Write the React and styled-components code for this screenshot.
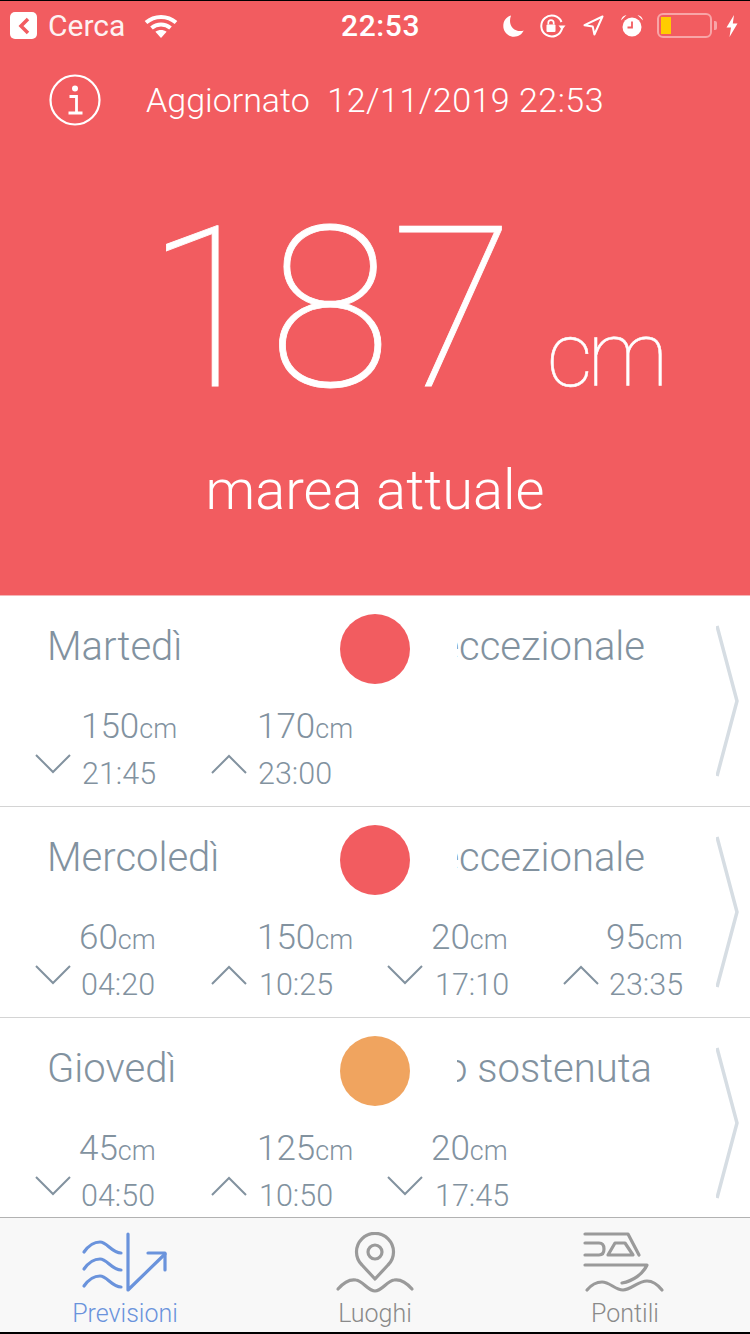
import React from "react";
import styled, { createGlobalStyle } from "styled-components";

const RED = "#f25c60";
const ORANGE = "#f0a45f";
const SLATE = "#82929f";

const GlobalStyle = createGlobalStyle`
  html, body { margin: 0; padding: 0; background: #000; }
  body { font-family: "Roboto", "Liberation Sans", sans-serif; }
`;

const Screen = styled.div`
  width: 750px;
  height: 1334px;
  padding: 1px 0 2px;
  box-sizing: border-box;
  display: flex;
  flex-direction: column;
  overflow: hidden;
  background: #000;
`;

const Header = styled.header`
  flex: 0 0 595px;
  box-sizing: border-box;
  background: ${RED};
  color: #fff;
  border-bottom: 1px solid #f5b5b7;
  display: flex;
  flex-direction: column;
`;

const StatusBar = styled.div`
  height: 49px;
  display: grid;
  grid-template-columns: 331px auto 1fr;
  align-items: center;
  padding: 0 12px 0 10px;
`;

const StatusLeft = styled.div`
  display: flex;
  align-items: center;
`;

const BackBadge = styled.span`
  width: 27px;
  height: 27px;
  border-radius: 5px;
  background: #fff;
  display: flex;
  align-items: center;
  justify-content: center;
`;

const Carrier = styled.span`
  font-size: 30px;
  margin: 0 19px 0 11px;
  opacity: 0.92;
`;

const Clock = styled.span`
  font-size: 30px;
  font-weight: 500;
  letter-spacing: 0.6px;
`;

const StatusRight = styled.div`
  display: flex;
  align-items: center;
  justify-content: flex-end;
  gap: 16px;
  & > svg:first-child {
    margin-right: -1px;
  }
`;

const Battery = styled.span`
  width: 55px;
  height: 25px;
  box-sizing: border-box;
  border: 2px solid rgba(255, 255, 255, 0.45);
  border-radius: 6px;
  padding: 2px;
  margin: 0 -2px 0 -3px;
  position: relative;
  display: block;
  &::before {
    content: "";
    display: block;
    width: 10px;
    height: 17px;
    background: #ffcc00;
  }
  &::after {
    content: "";
    position: absolute;
    right: -7px;
    top: 6px;
    width: 3px;
    height: 9px;
    background: rgba(255, 255, 255, 0.45);
    border-radius: 0 2px 2px 0;
  }
`;

const InfoRow = styled.div`
  display: flex;
  align-items: center;
  gap: 45px;
  padding: 0 0 0 49px;
  height: 52px;
  margin-top: 24px;
`;

const Updated = styled.span`
  font-size: 34px;
  font-weight: 300;
  white-space: pre;
`;

const UpdatedDate = styled.span`
  letter-spacing: 0.5px;
  margin-left: 1px;
`;

const Reading = styled.div`
  display: flex;
  align-items: baseline;
  margin: 104px 0 0 146px;
  height: 160px;
  line-height: 160px;
`;

const ReadingValue = styled.span`
  font-size: 224px;
  font-weight: 100;
  -webkit-text-stroke: 0.8px #fff;
`;

const ReadingUnit = styled.span`
  font-size: 90px;
  font-weight: 100;
  letter-spacing: -5px;
  margin-left: 33px;
  -webkit-text-stroke: 0.5px #fff;
`;

const Caption = styled.div`
  margin-top: 70px;
  text-align: center;
  font-size: 56px;
  font-weight: 300;
  line-height: 60px;
`;

const List = styled.main`
  flex: 1;
  min-height: 0;
  overflow: hidden;
  background: #fff;
`;

const Row = styled.section`
  height: 211px;
  box-sizing: border-box;
  border-bottom: 1px solid #d4d4d4;
  display: flex;
  color: ${SLATE};
`;

const RowBody = styled.div`
  width: 716px;
  flex: none;
  padding-top: 18px;
  box-sizing: border-box;
`;

const TitleLine = styled.div`
  display: flex;
  align-items: center;
  height: 70px;
`;

const Day = styled.h2`
  margin: 0;
  flex: 0 0 340px;
  box-sizing: border-box;
  padding: 0 0 6px 47px;
  font-size: 40px;
  font-weight: 300;
`;

const Dot = styled.span`
  flex: none;
  width: 70px;
  height: 70px;
  border-radius: 50%;
  background: ${(p) => p.$color};
`;

const Level = styled.div`
  margin-left: 47px;
  width: ${(p) => p.$width}px;
  overflow: hidden;
  display: flex;
  justify-content: flex-end;
  white-space: nowrap;
  padding-bottom: 6px;
  font-size: 40px;
  font-weight: 300;
`;

const Tides = styled.div`
  display: grid;
  grid-template-columns: repeat(4, 176px);
  margin: 22px 0 0 35px;
`;

const Tide = styled.div`
  display: flex;
  align-items: flex-end;
`;

const TideText = styled.div`
  margin-left: ${(p) => p.$offset}px;
  display: flex;
  flex-direction: column;
`;

const TideValue = styled.div`
  font-size: 35px;
  font-weight: 300;
  line-height: 42px;
  span {
    font-size: 27px;
  }
`;

const TideTime = styled.div`
  margin-left: ${(p) => p.$indent}px;
  font-size: 30.5px;
  font-weight: 300;
  line-height: 48px;
`;

const TideArrow = styled.svg`
  width: 36px;
  height: 20px;
  flex: none;
  margin-bottom: 24px;
`;

const RowChevron = styled.svg`
  width: 26px;
  height: 154px;
  flex: none;
  margin-top: 29px;
`;

const TabBar = styled.nav`
  flex: 0 0 115px;
  box-sizing: border-box;
  background: #f8f8f8;
  border-top: 1px solid #b2b2b2;
  display: grid;
  grid-template-columns: repeat(3, 250px);
`;

const Tab = styled.div`
  display: flex;
  flex-direction: column;
  align-items: center;
  color: ${(p) => (p.$active ? "#6a93dc" : "#8a8a8a")};
  font-size: 25px;
  font-weight: 300;
  line-height: 30px;
  padding-top: 14px;
`;

const TabIcon = styled.svg`
  width: 100px;
  height: 66px;
  margin-bottom: 1px;
  flex: none;
  fill: none;
  stroke: ${(p) => (p.$active ? "#6a93dc" : "#9a9a9a")};
  stroke-width: 3.2;
  stroke-linecap: round;
  stroke-linejoin: round;
`;

const days = [
  {
    name: "Martedì",
    color: RED,
    level: "eccezionale",
    levelWidth: 188,
    tides: [
      { dir: "down", value: 150, time: "21:45", offset: 10, indent: 1 },
      { dir: "up", value: 170, time: "23:00", offset: 10, indent: 1 },
    ],
  },
  {
    name: "Mercoledì",
    color: RED,
    level: "eccezionale",
    levelWidth: 188,
    tides: [
      { dir: "down", value: 60, time: "04:20", offset: 8, indent: 2 },
      { dir: "up", value: 150, time: "10:25", offset: 10, indent: 2 },
      { dir: "down", value: 20, time: "17:10", offset: 8, indent: 4 },
      { dir: "up", value: 95, time: "23:35", offset: 7, indent: 3 },
    ],
  },
  {
    name: "Giovedì",
    color: ORANGE,
    level: "molto sostenuta",
    levelWidth: 195,
    tides: [
      { dir: "down", value: 45, time: "04:50", offset: 8, indent: 2 },
      { dir: "up", value: 125, time: "10:50", offset: 10, indent: 2 },
      { dir: "down", value: 20, time: "17:45", offset: 8, indent: 4 },
    ],
  },
];

const Wifi = () => (
  <svg width="34" height="26" viewBox="0 0 34 26" fill="none" stroke="#fff" strokeWidth="4">
    <path d="M2 9.5C10.5 2 23.5 2 32 9.5" />
    <path d="M7.5 15C13 10.4 21 10.4 26.5 15" />
    <path d="M17 25l-5.6-6.2c3.2-2.4 8-2.4 11.2 0z" fill="#fff" stroke="none" />
  </svg>
);

const Moon = () => (
  <svg width="21" height="22" viewBox="0 0 21 22">
    <path d="M8 0.5C3.2 2 0.3 6 0.3 11c0 6 4.8 10.7 10.7 10.7 4.4 0 8-2.4 9.7-6.2-1 .4-2.2.6-3.4.6C11.4 16.100 7 11.700 7 6c0-2 .3-3.800 1-5.500z" fill="#fff" />
  </svg>
);

const RotationLock = () => (
  <svg width="28" height="24" viewBox="0 0 28 24" fill="none" stroke="#fff" strokeWidth="2">
    <path d="M23 14.500A10.500 10.500 0 1 1 22.500 8" />
    <path d="M19.500 11.500h7l-3.500 4.500z" fill="#fff" stroke="none" />
    <rect x="7.500" y="10.500" width="9" height="7.500" rx="1" fill="#fff" stroke="none" />
    <path d="M9.300 10.500V8.800a2.700 2.700 0 0 1 5.400 0v1.700" strokeWidth="1.700" />
  </svg>
);

const Location = () => (
  <svg width="21" height="21" viewBox="0 0 21 21" fill="none" stroke="#fff" strokeWidth="2" strokeLinejoin="round">
    <path d="M19.500 1.500L1.500 10.200l8.200 1.200 1.700 8.100z" />
  </svg>
);

const Alarm = () => (
  <svg width="24" height="23" viewBox="0 0 24 23">
    <circle cx="12" cy="13" r="9.500" fill="#fff" />
    <path d="M12 7.500V13.500H7.500" fill="none" stroke={RED} strokeWidth="1.800" />
    <path d="M1 6.500C1.500 3.500 3.500 1.500 6.500 1zM23 6.500C22.500 3.500 20.500 1.500 17.500 1z" fill="#fff" />
  </svg>
);

const Bolt = () => (
  <svg width="12" height="22" viewBox="0 0 12 22">
    <path d="M8 0L0.500 12.500H5L3.500 22 11.500 8.500H6.800z" fill="#fff" />
  </svg>
);

const InfoIcon = () => (
  <svg width="52" height="52" viewBox="0 0 52 52" fill="none" stroke="#fff">
    <circle cx="26" cy="26" r="24.500" strokeWidth="2.200" />
    <circle cx="26" cy="14.500" r="3" fill="#fff" stroke="none" />
    <path d="M20.500 22.500H27.500V38M19.500 39H33.500" strokeWidth="2.800" />
  </svg>
);

const ForecastIcon = () => (
  <TabIcon $active viewBox="0 0 100 66">
    <path d="M9 20C14 13 20 10 25 10c7 0 12 11 21 11" />
    <path d="M9 37C14 30 20 27 25 27c7 0 12 11 21 11" />
    <path d="M9 54C14 47 20 44 25 44c7 0 12 11 21 11" />
    <path d="M53 2V58L90 22" />
    <path d="M73 21H90V38" />
  </TabIcon>
);

const PlacesIcon = () => (
  <TabIcon viewBox="0 0 100 66">
    <path d="M50 47L37 33a18.500 18.500 0 1 1 26 0z" />
    <circle cx="50" cy="20" r="7" />
    <path d="M13 57C19 50 25 47 31 48c7 1 12 11 19 11s12-10 19-11c6-1 12 2 18 9" />
  </TabIcon>
);

const PiersIcon = () => (
  <TabIcon viewBox="0 0 100 66">
    <path d="M10 2H53L64 23" />
    <path d="M10 11H24C28 11 29 14 29 17S28 23 24 23H10" />
    <path d="M33 23L40 11H50L58 23z" />
    <path d="M10 33H72C68 42 58 49 47 51" />
    <path d="M12 58C17 52 22 50 27 50c8 0 13 8 21 8s15-9 24-9c6 0 11 4 15 9" />
  </TabIcon>
);

const TideItem = ({ dir, value, time, offset, indent }) => (
  <Tide>
    <TideArrow viewBox="0 0 36 20" fill="none" stroke={SLATE} strokeWidth="2">
      <path d={dir === "down" ? "M1 1L18 18L35 1" : "M1 19L18 2L35 19"} />
    </TideArrow>
    <TideText $offset={offset}>
      <TideValue>
        {value}
        <span>cm</span>
      </TideValue>
      <TideTime $indent={indent}>{time}</TideTime>
    </TideText>
  </Tide>
);

const App = () => (
  <Screen>
    <GlobalStyle />
    <Header>
      <StatusBar>
        <StatusLeft>
          <BackBadge>
            <svg width="12" height="18" viewBox="0 0 12 18" fill="none" stroke={RED} strokeWidth="3.500">
              <path d="M10 2L3 9l7 7" />
            </svg>
          </BackBadge>
          <Carrier>Cerca</Carrier>
          <Wifi />
        </StatusLeft>
        <Clock>22:53</Clock>
        <StatusRight>
          <Moon />
          <RotationLock />
          <Location />
          <Alarm />
          <Battery />
          <Bolt />
        </StatusRight>
      </StatusBar>
      <InfoRow>
        <InfoIcon />
        <Updated>
          Aggiornato  <UpdatedDate>12/11/2019 22:53</UpdatedDate>
        </Updated>
      </InfoRow>
      <Reading>
        <ReadingValue>187</ReadingValue>
        <ReadingUnit>cm</ReadingUnit>
      </Reading>
      <Caption>marea attuale</Caption>
    </Header>
    <List>
      {days.map((day) => (
        <Row key={day.name}>
          <RowBody>
            <TitleLine>
              <Day>{day.name}</Day>
              <Dot $color={day.color} />
              <Level $width={day.levelWidth}>{day.level}</Level>
            </TitleLine>
            <Tides>
              {day.tides.map((tide) => (
                <TideItem key={tide.time} {...tide} />
              ))}
            </Tides>
          </RowBody>
          <RowChevron viewBox="0 0 26 154" fill="none" stroke="#d6dde3" strokeWidth="3.500">
            <path d="M1 1L21 76L1 151" />
          </RowChevron>
        </Row>
      ))}
    </List>
    <TabBar>
      <Tab $active>
        <ForecastIcon />
        Previsioni
      </Tab>
      <Tab>
        <PlacesIcon />
        Luoghi
      </Tab>
      <Tab>
        <PiersIcon />
        Pontili
      </Tab>
    </TabBar>
  </Screen>
);

export default App;
